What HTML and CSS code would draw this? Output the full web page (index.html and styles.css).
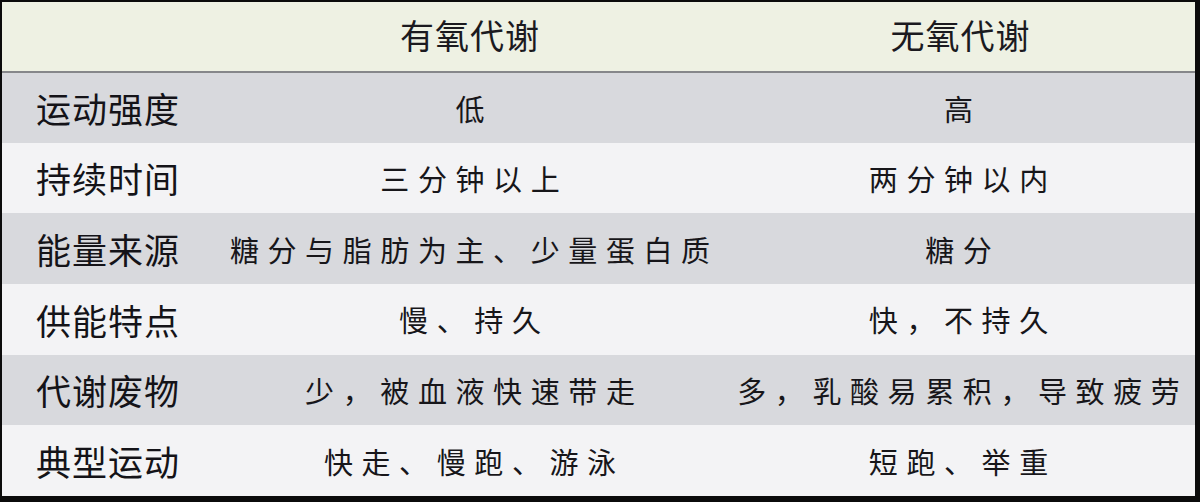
FILE: index.html
```html
<!DOCTYPE html>
<html lang="zh-CN">
<head>
<meta charset="utf-8">
<link rel="stylesheet" href="styles.css">
</head>
<body>
<div class="frame">
  <table class="cmp">
    <colgroup>
      <col class="c-label">
      <col class="c-aer">
      <col class="c-ana">
    </colgroup>
    <thead>
      <tr class="head">
        <th></th>
        <th>有氧代谢</th>
        <th>无氧代谢</th>
      </tr>
    </thead>
    <tbody>
      <tr class="grey">
        <td class="label">运动强度</td>
        <td><span class="v">低</span></td>
        <td><span class="v">高</span></td>
      </tr>
      <tr class="white">
        <td class="label">持续时间</td>
        <td><span class="v">三分钟以上</span></td>
        <td><span class="v">两分钟以内</span></td>
      </tr>
      <tr class="grey">
        <td class="label">能量来源</td>
        <td><span class="v">糖分与脂肪为主、少量蛋白质</span></td>
        <td><span class="v">糖分</span></td>
      </tr>
      <tr class="white">
        <td class="label">供能特点</td>
        <td><span class="v">慢、持久</span></td>
        <td><span class="v">快，不持久</span></td>
      </tr>
      <tr class="grey">
        <td class="label">代谢废物</td>
        <td><span class="v">少，被血液快速带走</span></td>
        <td><span class="v">多，乳酸易累积，导致疲劳</span></td>
      </tr>
      <tr class="white">
        <td class="label">典型运动</td>
        <td><span class="v">快走、慢跑、游泳</span></td>
        <td><span class="v">短跑、举重</span></td>
      </tr>
    </tbody>
  </table>
</div>
</body>
</html>
```

FILE: styles.css
```css
html, body {
  margin: 0;
  padding: 0;
  background: #0b0b0b;
}
body {
  width: 1200px;
  height: 502px;
  overflow: hidden;
  font-family: "Noto Sans CJK SC", "Noto Sans", sans-serif;
  color: #1b1a1f;
}
.frame {
  margin: 2px 5px 6px 2px;
  width: 1193px;
  height: 494px;
  background: #f4f4f6;
}
.cmp {
  width: 1193px;
  height: 494px;
  border-collapse: collapse;
  table-layout: fixed;
}
.c-label { width: 216px; }
.c-aer { width: 504px; }
.c-ana { width: 473px; }

.head {
  height: 70px;
  background: #eef1e3;
  border-bottom: 2px solid #86878a;
}
.head th {
  font-weight: 400;
  font-size: 34px;
  text-align: center;
  padding: 0 0 4px;
  letter-spacing: 1px;
}
.head th:nth-child(3) {
  padding-left: 4px;
}
tbody tr {
  height: 70px;
}
.grey { background: #d8d9dd; }
.white { background: #f3f3f5; }

td {
  padding: 0;
  text-align: center;
  vertical-align: middle;
}
td.label {
  text-align: left;
  padding-left: 34px;
  font-size: 35px;
  font-weight: 400;
  letter-spacing: 1px;
  color: #141318;
}
.v {
  font-size: 29px;
  letter-spacing: 8.6px;
  margin-right: -8.6px;
  font-weight: 400;
  color: #17161a;
}
```
